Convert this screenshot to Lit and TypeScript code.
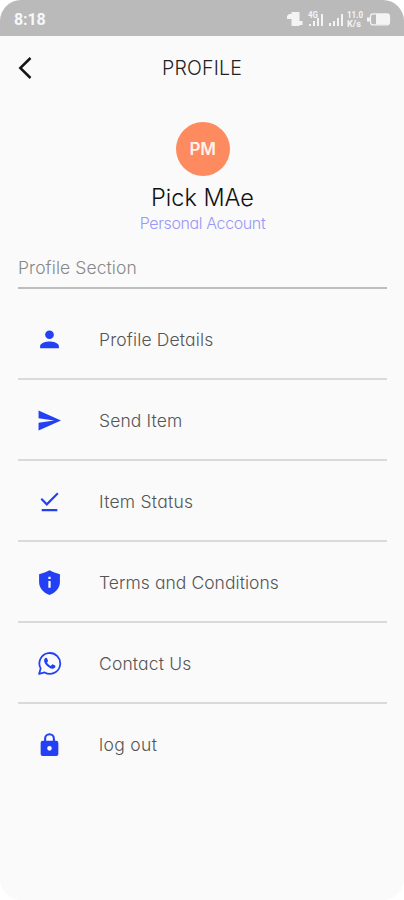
import { LitElement, html, css, svg } from "lit";
import { customElement } from "lit/decorators.js";
import { styleMap } from "lit/directives/style-map.js";

const icons = {
  person: svg`<path d="M12 11.500c2.300 0 4.200-1.800 4.200-4.100s-1.900-4.100-4.200-4.100-4.200 1.800-4.200 4.100 1.900 4.100 4.200 4.100zm0 2.300c-2.900 0-9 1.400-9 4.300v2.400h18v-2.400c0-2.900-6.100-4.300-9-4.300z"/>`,
  send: svg`<path d="M1.500 21.500 23 12 1.500 2.500v7.400L16.500 12l-15 2.100z"/>`,
  done: svg`<path d="M4.500 19.300h15v2h-15zM9.400 16.300 3.400 10.100l1.400-1.500 4.600 4.700L19.300 3.400l1.400 1.500z"/>`,
  shield: svg`<path fill-rule="evenodd" d="M12 .3 8 2.200 2 4v7.500C2 17.300 6.200 22 12 24c5.800-2 10-6.700 10-12.500V4l-6-1.800zM10.900 6.500h2.200v2.200h-2.200zM10.900 10.500h2.200v6.600h-2.200z"/>`,
  chat: svg`<path fill="none" stroke="currentColor" stroke-width="1.700" stroke-linejoin="round" d="M2 22l1.500-5.300a10 10 0 1 1 3.800 3.900z"/><path d="M8.500 6.500c-.4 0-1.700.9-1.700 2.700 0 2 1.500 3.900 2.700 5 1.500 1.500 3.400 2.800 5.400 2.800 1.500 0 2.800-1 2.800-2.600 0-.4-2.500-1.600-2.900-1.600-.5 0-1 1.500-1.500 1.500-.9 0-3.600-2.500-3.600-3.300 0-.4.900-.9.900-1.500 0-.4-.9-2.600-1.200-2.900-.2-.1-.6-.1-.9-.1z"/>`,
  lock: svg`<path fill-rule="evenodd" d="M18.500 8.500h-1.300v-2.200a5.200 5.200 0 0 0-10.400 0v2.200H5.500a2 2 0 0 0-2 2V21a2 2 0 0 0 2 2h13a2 2 0 0 0 2-2V10.500a2 2 0 0 0-2-2zM8.800 8.500v-2.200a3.200 3.200 0 0 1 6.400 0v2.200zM12 17.900a2.200 2.200 0 1 1 0-4.400 2.200 2.200 0 0 1 0 4.400z"/>`,
};

const entries = [
  { label: "Profile Details", icon: icons.person, tracking: 0.15 },
  { label: "Send Item", icon: icons.send, tracking: 0.12 },
  { label: "Item Status", icon: icons.done, tracking: 0.25 },
  { label: "Terms and Conditions", icon: icons.shield, tracking: 0.05 },
  { label: "Contact Us", icon: icons.chat, tracking: 0.15 },
  { label: "log out", icon: icons.lock, tracking: 0.35 },
];

@customElement("app-root")
export class AppRoot extends LitElement {
  static styles = css`
    :host {
      display: block;
      height: 900px;
      background: #fff;
      font-family: Inter, "Liberation Sans", sans-serif;
      font-weight: 300;
      font-feature-settings: "cv11", "ss03";
    }
    * { box-sizing: border-box; }
    .screen {
      height: 900px;
      background: #fafafa;
      border-radius: 21px;
      overflow: hidden;
      display: flex;
      flex-direction: column;
    }
    .status {
      height: 36px;
      background: #bababa;
      display: flex;
      align-items: center;
      justify-content: space-between;
      padding: 3px 12px 0 14px;
      color: #f8f8f8;
    }
    .time { font: 700 16px/20px Roboto, sans-serif; letter-spacing: -0.1px; }
    .tray { display: block; }
    .tray text { font: 700 9px Roboto, sans-serif; }
    .bar {
      height: 64px;
      display: grid;
      grid-template-columns: 52px 1fr 52px;
      align-items: center;
    }
    .back { display: block; margin-left: 17px; }
    .title { text-align: center; font-size: 19.500px; color: #222; letter-spacing: 0.2px; }
    .person { display: flex; flex-direction: column; align-items: center; padding: 22px 0 0 1px; }
    .avatar {
      width: 54px;
      height: 54px;
      border-radius: 50%;
      background: #fe8a60;
      color: #fff3ec;
      font-size: 17px;
      font-weight: 600;
      letter-spacing: -0.3px;
      line-height: 54px;
      text-align: center;
    }
    .name { margin-top: 7px; font-size: 23.500px; line-height: 30px; color: #111; }
    .kind { font-size: 16px; line-height: 20px; color: #9898f8; letter-spacing: -0.38px; }
    .section {
      height: 56px;
      margin: 0 17px 0 18px;
      padding-top: 23px;
      border-bottom: 2px solid #bdbdbd;
      font-size: 17.500px;
      line-height: 24px;
      color: #888;
      letter-spacing: 0.08px;
    }
    .list { margin: 10px 17px 0 18px; }
    .row {
      height: 81px;
      padding: 2px 0 0 19px;
      display: flex;
      align-items: center;
      gap: 37px;
      border-bottom: 2px solid #dadada;
      font-size: 17.500px;
      color: #555;
    }
    .row:last-child { border-bottom-color: transparent; }
    .glyph { width: 25px; height: 25px; fill: currentColor; color: #2340f5; }
  `;

  render() {
    return html`
      <div class="screen">
        <div class="status">
          <span class="time">8:18</span>
          <svg class="tray" width="106" height="20" viewBox="0 0 106 20" fill="#f4f4f4">
            <path d="M5.500 2h8v9h3v4h-3v1h-8V9H1V6l2-2h2.500z" />
            <text x="22" y="8" textLength="10" lengthAdjust="spacingAndGlyphs">4G</text>
            <path d="M23 14h2v2h-2zM27 11h2v5h-2zM31 8h2v8h-2zM35 4h2v12h-2z" />
            <path d="M43 13h2v3h-2zM47 11h2v5h-2zM51 8h2v8h-2zM55 4h2v12h-2z" />
            <text x="61" y="8" textLength="16" lengthAdjust="spacingAndGlyphs">11.0</text>
            <text x="61" y="17" textLength="14" lengthAdjust="spacingAndGlyphs">K/s</text>
            <rect x="84.500" y="3.800" width="19" height="11" rx="2.500" fill="none" stroke="#f4f4f4" stroke-width="1.200" />
            <path d="M90 4h13v10.500H90zM81 7.500h3v4h-3z" />
          </svg>
        </div>
        <div class="bar">
          <svg class="back" width="16" height="24" viewBox="0 0 16 24">
            <path d="M13.500 2 3.300 12l10.200 10" fill="none" stroke="#151515" stroke-width="2.500" />
          </svg>
          <span class="title">PROFILE</span>
        </div>
        <div class="person">
          <div class="avatar">PM</div>
          <div class="name">Pick MAe</div>
          <div class="kind">Personal Account</div>
        </div>
        <div class="section">Profile Section</div>
        <div class="list">
          ${entries.map(
            (e) => html`<div class="row">
              <svg class="glyph" viewBox="0 0 24 24">${e.icon}</svg>
              <span style=${styleMap({ letterSpacing: `${e.tracking}px` })}>${e.label}</span>
            </div>`
          )}
        </div>
      </div>
    `;
  }
}
